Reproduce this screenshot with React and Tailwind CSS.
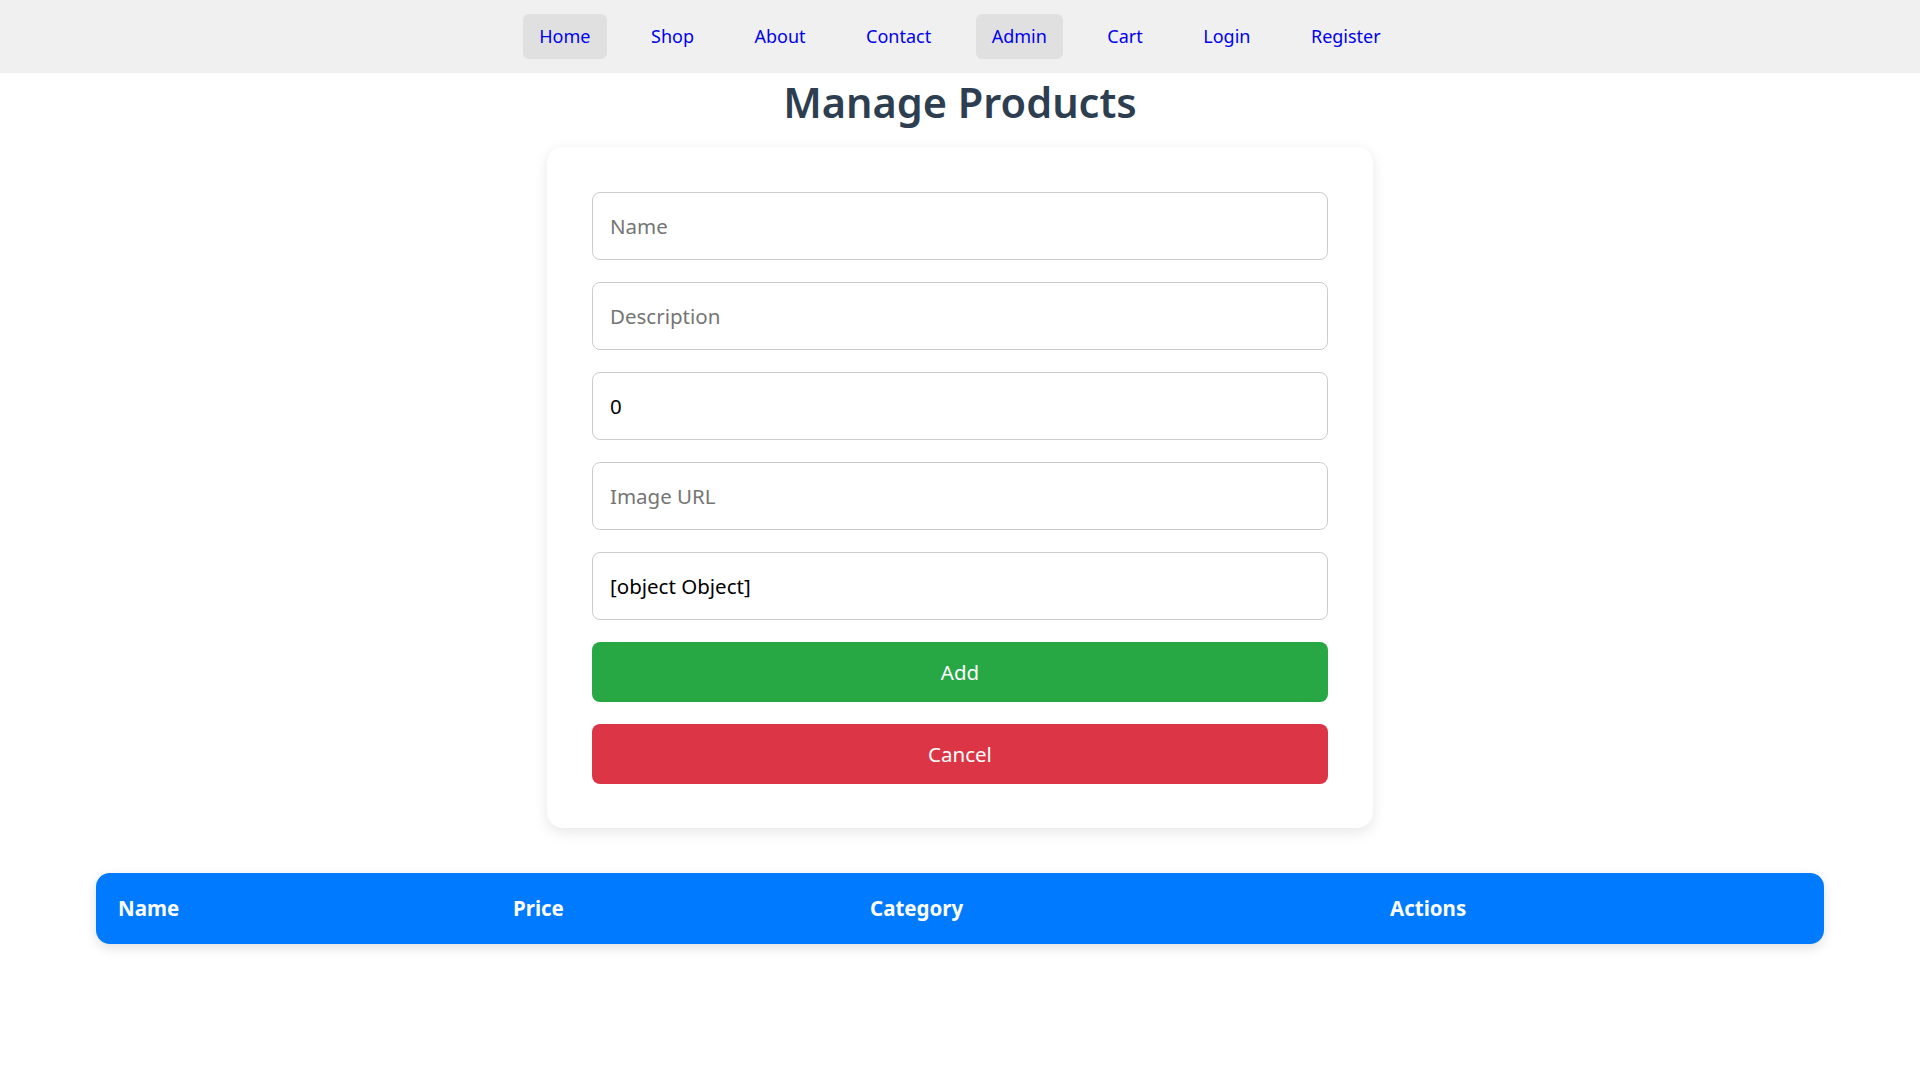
import React, { useState } from "react";

const links = ["Home", "Shop", "About", "Contact", "Admin", "Cart", "Login", "Register"];
const active = ["Home", "Admin"];

function Nav() {
  return (
    <nav className="h-[73px] bg-[#f0f0f0] flex items-center justify-center gap-[28.5px]">
      {links.map((l) => (
        <a
          key={l}
          href="#"
          className={`h-[45px] px-4 flex items-center rounded-[6px] text-[18px] text-[#0000ee] ${
            active.includes(l) ? "bg-[#e0e0e0]" : ""
          }`}
        >
          {l}
        </a>
      ))}
    </nav>
  );
}

export default function App() {
  const [form, setForm] = useState({ name: "", description: "", price: "0", image: "", category: "[object Object]" });
  const set = (k) => (e) => setForm({ ...form, [k]: e.target.value });

  const inputCls =
    "h-[68px] w-full border border-[#cccccc] rounded-lg px-[17px] text-[20.5px] text-black placeholder:text-[#757575] outline-none bg-white";

  return (
    <div className="min-h-screen bg-white" style={{ fontFamily: '"Noto Sans", "Open Sans", sans-serif' }}>
      <Nav />

      <h1 className="mt-[5px] mb-[21px] text-center text-[41.5px] leading-[48px] font-semibold text-[#2c3e50]">
        Manage Products
      </h1>

      <div className="w-[826px] mx-auto bg-white rounded-2xl p-[45px] pb-[44px] shadow-[0_4px_14px_rgba(0,0,0,0.1)]">
        <div className="flex flex-col gap-[22px]">
          <input className={inputCls} placeholder="Name" value={form.name} onChange={set("name")} />
          <input className={inputCls} placeholder="Description" value={form.description} onChange={set("description")} />
          <input className={inputCls} placeholder="Price" value={form.price} onChange={set("price")} />
          <input className={inputCls} placeholder="Image URL" value={form.image} onChange={set("image")} />
          <input className={inputCls} placeholder="Category" value={form.category} onChange={set("category")} />
          <button className="h-[60px] w-full rounded-lg bg-[#28a745] text-white text-[20.5px]">Add</button>
          <button className="h-[60px] w-full rounded-lg bg-[#dc3545] text-white text-[20.5px]">Cancel</button>
        </div>
      </div>

      <div className="w-[90%] mx-auto mt-[45px] h-[71px] rounded-[14px] bg-[#007bff] shadow-[0_4px_12px_rgba(0,0,0,0.12)] grid grid-cols-[395px_357px_520px_1fr] items-center text-white font-bold text-[20.5px]">
        <div className="pl-[22px]">Name</div>
        <div className="pl-[22px]">Price</div>
        <div className="pl-[22px]">Category</div>
        <div className="pl-[22px]">Actions</div>
      </div>
    </div>
  );
}
